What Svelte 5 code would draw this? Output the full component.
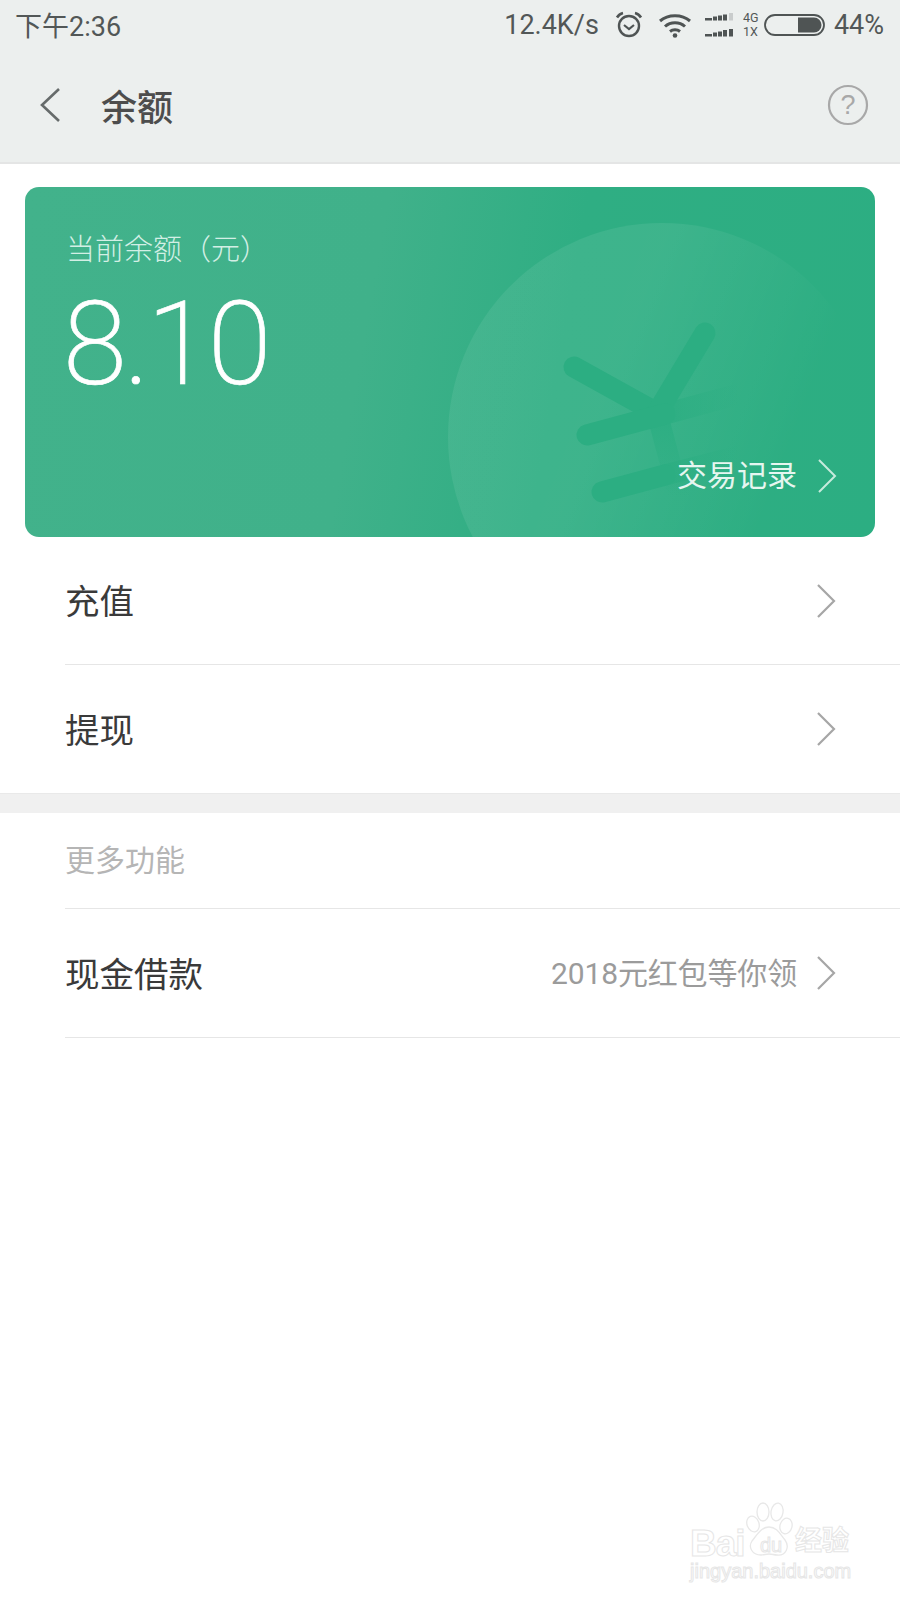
<script>
  const rows = [{ t: '充值' }, { t: '提现', last: true }];
</script>

<div class="page">
  <header class="head">
    <div class="status">
      <span class="time">下午2:36</span>
      <div class="sys">
        <span class="speed">12.4K/s</span>
        <svg class="alarm" viewBox="0 0 30 30" width="30" height="30" fill="none" stroke="#4f5454">
          <circle cx="15" cy="16" r="10" stroke-width="2.4"/>
          <path d="M10 15l5 4 5-4" stroke-width="2.2"/>
          <path d="M3 7.5C4.5 5 6.5 3.6 9 3M27 7.500C25.500 5 23.500 3.600 21 3" stroke-width="2.6"/>
        </svg>
        <svg class="wifi" viewBox="0 0 34 26" width="34" height="26" fill="none" stroke="#4f5454" stroke-width="3">
          <path d="M2 9C10 2 24 2 32 9"/>
          <path d="M7 14.500C12.500 9.500 21.500 9.500 27 14.500"/>
          <path d="M12 19.500C14.800 17.200 19.200 17.200 22 19.500"/>
          <circle cx="17" cy="23.500" r="2.300" fill="#4f5454" stroke="none"/>
        </svg>
        <svg class="signal" viewBox="0 0 32 26" width="32" height="26" fill="#4f5454">
          <rect x="0" y="6" width="7" height="2.500"/><rect x="8" y="4.500" width="4" height="4"/><rect x="13" y="3.500" width="4" height="5"/><rect x="18" y="2.500" width="4" height="6"/><rect x="24" y="1" width="4" height="7.500" fill="#c9cccc"/>
          <rect x="0" y="22" width="7" height="2.500"/><rect x="8" y="20.500" width="4" height="4"/><rect x="13" y="19.500" width="4" height="5"/><rect x="18" y="18" width="4" height="6.500"/><rect x="24" y="17" width="4" height="7.500"/>
        </svg>
        <span class="net"><span>4G</span><span>1X</span></span>
        <svg class="batt" viewBox="0 0 62 22" width="62" height="22">
          <rect x="1" y="1" width="59" height="20" rx="10" fill="none" stroke="#4f5454" stroke-width="1.800"/>
          <path d="M34 3.500H50a7.500 7.500 0 0 1 0 15H34z" fill="#4f5454"/>
        </svg>
        <span class="pct">44%</span>
      </div>
    </div>
    <nav class="nav">
      <svg class="back" viewBox="0 0 24 36" width="24" height="36" fill="none" stroke="#666b6b" stroke-width="2.600"><path d="M20 2L3 18l17 16"/></svg>
      <h1>余额</h1>
      <svg class="help" viewBox="0 0 42 42" width="42" height="42" fill="none">
        <circle cx="21" cy="21" r="19" stroke="#a8a8a8" stroke-width="2.200"/>
        <text x="21" y="30" text-anchor="middle" class="q">?</text>
      </svg>
    </nav>
  </header>

  <section class="card">
    <svg class="bg" viewBox="0 0 850 350" width="850" height="350" aria-hidden="true">
      <defs>
        <linearGradient id="fade" gradientUnits="userSpaceOnUse" x1="420" y1="100" x2="840" y2="260">
          <stop offset="0" stop-color="#fff" stop-opacity=".07"/>
          <stop offset=".42" stop-color="#fff" stop-opacity=".075"/>
          <stop offset=".65" stop-color="#fff" stop-opacity=".035"/>
          <stop offset=".85" stop-color="#fff" stop-opacity="0"/>
        </linearGradient>
        <linearGradient id="arm" gradientUnits="userSpaceOnUse" x1="630" y1="0" x2="715" y2="0">
          <stop offset="0" stop-color="#2cae82"/>
          <stop offset="1" stop-color="#2cae82" stop-opacity="0"/>
        </linearGradient>
        <linearGradient id="stem" gradientUnits="userSpaceOnUse" x1="0" y1="225" x2="0" y2="310">
          <stop offset="0" stop-color="#2cae82"/>
          <stop offset="1" stop-color="#2cae82" stop-opacity="0"/>
        </linearGradient>
      </defs>
      <circle cx="637" cy="250" r="214" fill="url(#fade)"/>
      <g stroke-width="21" fill="none">
        <path d="M632 226L665 350" stroke="url(#stem)"/>
        <path d="M640 227L725 204" stroke="url(#arm)"/>
        <path d="M640 288L725 266" stroke="url(#arm)"/>
      </g>
      <g stroke="#2cae82" stroke-width="21" stroke-linecap="round" fill="none">
        <path d="M549 180L632 226"/>
        <path d="M680 146L632 226"/>
        <path d="M562 248L640 227"/>
        <path d="M577 305L640 288"/>
      </g>
    </svg>
    <div class="label">当前余额（元）</div>
    <div class="amount">8.10</div>
    <div class="records">
      <span>交易记录</span>
      <svg viewBox="0 0 20 36" width="20" height="36" fill="none" stroke="#c6ebdd" stroke-width="2"><path d="M2 2l16 16L2 34"/></svg>
    </div>
  </section>

  <ul class="list">
    {#each rows as r}
      <li class="row" class:last={r.last}>
        <span class="title">{r.t}</span>
        <svg class="chev" viewBox="0 0 20 36" width="20" height="36" fill="none" stroke="#a6a6a6" stroke-width="2.200"><path d="M2 2l16 16L2 34"/></svg>
      </li>
    {/each}
  </ul>

  <div class="gap"></div>

  <div class="more">更多功能</div>
  <div class="row loan">
    <span class="title">现金借款</span>
    <span class="hint">2018元红包等你领</span>
    <svg class="chev" viewBox="0 0 20 36" width="20" height="36" fill="none" stroke="#a6a6a6" stroke-width="2.200"><path d="M2 2l16 16L2 34"/></svg>
  </div>

  <div class="mark" aria-hidden="true">
    <span class="bai">Bai</span>
    <svg class="paw" viewBox="0 0 48 56" width="48" height="56" fill="#fff" stroke="#e8e8e8" stroke-width="1.300">
      <ellipse cx="8" cy="22" rx="6" ry="8" transform="rotate(-20 8 22)"/>
      <ellipse cx="18" cy="10" rx="6" ry="9"/>
      <ellipse cx="32" cy="10" rx="6" ry="9" transform="rotate(10 32 10)"/>
      <ellipse cx="41" cy="24" rx="6" ry="8" transform="rotate(15 41 24)"/>
      <path d="M24 25c8 0 11 7 16 13 5 7 1 16-8 15-3 0-5-1-8-1s-5 1-8 1C7 53 3 45 7 39c5-6 9-14 17-14z"/>
    </svg>
    <span class="du">du</span>
    <span class="jy">经验</span>
    <span class="url">jingyan.baidu.com</span>
  </div>
</div>

<style>
  :global(body) { margin: 0; background: #fff; }
  .page {
    position: relative;
    width: 900px;
    height: 1600px;
    overflow: hidden;
    background: #fff;
    font-family: "Roboto", "Noto Sans CJK SC", sans-serif;
    color: #333;
  }
  .head {
    background: #ecefee;
    height: 162px;
    border-bottom: 2px solid #e4e5e5;
  }
  .status {
    height: 52px;
    box-sizing: border-box;
    padding: 0 16px 2px;
    display: flex;
    align-items: center;
    justify-content: space-between;
    color: #525757;
    font-size: 27px;
  }
  .time { margin-left: -1px; margin-bottom: 2px; }
  .sys { display: flex; align-items: center; }
  .speed { margin-right: 15px; }
  .wifi { margin-left: 14px; }
  .signal { margin-left: 13px; }
  .net {
    display: flex;
    flex-direction: column;
    font-size: 12.500px;
    line-height: 14px;
    margin-left: 6px;
    width: 20px;
  }
  .batt { margin-left: 1px; }
  .pct { margin-left: 8px; }
  .nav {
    height: 106px;
    display: flex;
    align-items: center;
    padding: 0 31px 0 39px;
  }
  .back { margin-right: 38px; }
  h1 {
    margin: 0;
    flex: 1;
    font-size: 36px;
    font-weight: 500;
    color: #4d4d4d;
  }
  .q { font-size: 27px; fill: #a8a8a8; font-family: "Liberation Sans", sans-serif; }
  .card {
    position: relative;
    overflow: hidden;
    box-sizing: border-box;
    width: 850px;
    height: 350px;
    margin: 23px 0 0 25px;
    padding: 43px 40px 0 41px;
    border-radius: 14px;
    background: linear-gradient(100deg, #42b28b 0%, #40b18a 40%, #2fae83 62%, #2cae82 100%);
    color: #fff;
  }
  .bg { position: absolute; left: 0; top: 0; }
  .label, .amount, .records { position: relative; }
  .label {
    font-size: 29px;
    line-height: 40px;
    color: #d3efe5;
    font-weight: 300;
  }
  .amount {
    font-size: 116px;
    line-height: 120px;
    margin-top: 14px;
    margin-left: -3px;
    font-weight: 200;
    letter-spacing: -3px;
    -webkit-text-stroke: 0.7px #fff;
  }
  .records {
    position: absolute;
    right: 38px;
    bottom: 43px;
    display: flex;
    align-items: center;
    gap: 20px;
    font-size: 30px;
    line-height: 36px;
    color: #e6f6f0;
  }
  .list { list-style: none; margin: 0; padding: 0; }
  .row {
    display: flex;
    align-items: center;
    height: 128px;
    margin-left: 65px;
    padding-right: 64px;
    border-bottom: 1px solid #e6e6e6;
    box-sizing: border-box;
  }
  .row.last { border-bottom: 0; height: 128px; }
  .title { flex: 1; font-size: 34.500px; line-height: 40px; margin-top: 3px; color: #3a3a3a; }
  .gap {
    height: 20px;
    background: #f0f0f0;
    border-top: 1px solid #e9e9e9;
    box-sizing: border-box;
  }
  .more {
    height: 96px;
    line-height: 96px;
    margin-left: 65px;
    font-size: 30px;
    color: #b5b5b5;
    border-bottom: 1px solid #e6e6e6;
    box-sizing: border-box;
  }
  .hint { font-size: 30px; line-height: 40px; margin-top: 2px; letter-spacing: -0.15px; color: #9b9b9b; margin-right: 19px; }
  .loan { height: 129px; }
  .mark {
    position: absolute;
    left: 690px;
    top: 1500px;
    width: 165px;
    height: 85px;
    color: #fff;
    -webkit-text-stroke: 1px #e6e6e6;
  }
  .mark span { position: absolute; white-space: nowrap; font-family: "Liberation Sans", "Noto Sans CJK SC", sans-serif; }
  .bai { left: 0; top: 22px; font-size: 37px; line-height: 44px; font-weight: 700; letter-spacing: -1px; }
  .paw { position: absolute; left: 55px; top: 2px; }
  .du { left: 70px; top: 34px; font-size: 20px; line-height: 22px; }
  .jy { left: 105px; top: 25px; font-size: 27px; line-height: 32px; font-weight: 700; }
  .url { left: 0; top: 61px; font-size: 20px; line-height: 20px; }
</style>
